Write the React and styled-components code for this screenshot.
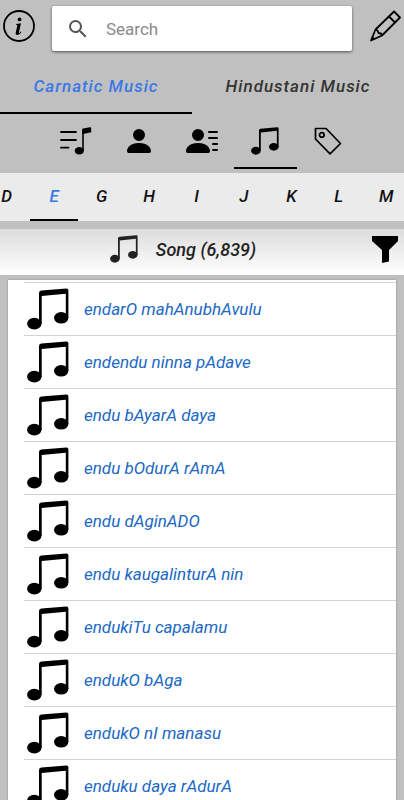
import React from "react";
import styled, { createGlobalStyle } from "styled-components";
import { BsPersonFill, BsPersonLinesFill } from "react-icons/bs";
import { MdSearch } from "react-icons/md";

const GlobalStyle = createGlobalStyle`
  *, *::before, *::after { box-sizing: border-box; }
  html, body { margin: 0; height: 100%; overflow: hidden; }
  #root { height: 100%; }
  body { background: #c0c0c0; font-family: Roboto, sans-serif; }
  button, input { font: inherit; color: inherit; }
  svg { display: block; flex: none; }
`;

const Page = styled.div`
  display: flex;
  flex-direction: column;
  height: 100%;
  background: #c0c0c0;
`;

const TopBar = styled.header`
  display: flex;
  align-items: flex-start;
  gap: 16px;
  padding: 6px 2px 0;
`;

const IconButton = styled.button`
  display: grid;
  place-items: center;
  flex: none;
  height: 40px;
  padding: 0;
  border: 0;
  background: none;
  color: #000;
`;

const SearchBox = styled.label`
  display: flex;
  align-items: center;
  flex: 1;
  min-width: 0;
  height: 45px;
  padding: 0 14px;
  gap: 16px;
  border-radius: 2px;
  background: #fff;
  color: #555;
  box-shadow: 0 1px 3px rgba(0, 0, 0, 0.6);
`;

const SearchInput = styled.input`
  flex: 1;
  min-width: 0;
  padding: 0;
  border: 0;
  outline: 0;
  background: none;
  font-size: 17px;
  &::placeholder { color: #8a8a8a; opacity: 1; }
`;

const StyleTabs = styled.nav`
  display: grid;
  grid-template-columns: 192fr 212fr;
  margin-top: 7px;
`;

const StyleTab = styled.button`
  height: 56px;
  padding: 2px 0 0;
  border: 0;
  border-bottom: 2px solid ${(p) => (p.$active ? "#000" : "transparent")};
  background: none;
  color: ${(p) => (p.$active ? "#3b78e7" : "#333")};
  font-size: 17px;
  font-style: italic;
  font-weight: 500;
  letter-spacing: 1px;
  white-space: nowrap;
`;

const KindTabs = styled.nav`
  display: flex;
  justify-content: center;
  height: 59px;
`;

const KindTab = styled.button`
  display: grid;
  place-items: center;
  width: 63px;
  height: 55px;
  padding: 0;
  border: 0;
  border-bottom: 2px solid ${(p) => (p.$active ? "#000" : "transparent")};
  background: none;
  color: #000;
`;

const LetterStrip = styled.nav`
  overflow: hidden;
  background: #ebebeb;
  flex: none;
`;

const LetterRow = styled.div`
  display: flex;
  margin: 0 -6px 0 -17px;
`;

const LetterTab = styled.button`
  flex: 1;
  height: 48px;
  padding: 0;
  border: 0;
  border-bottom: 2px solid ${(p) => (p.$active ? "#000" : "transparent")};
  background: none;
  color: ${(p) => (p.$active ? "#3b78e7" : "#111")};
  font-size: 17px;
  font-style: italic;
  font-weight: 500;
`;

const Heading = styled.div`
  display: grid;
  grid-template-columns: 1fr auto 1fr;
  align-items: center;
  flex: none;
  height: 46px;
  margin: 8px 0 5px;
  padding: 0 5px 6px;
  background: linear-gradient(#dcdcdc, #fff);
`;

const HeadingTitle = styled.h1`
  grid-column: 2;
  display: flex;
  align-items: center;
  gap: 18px;
  margin: 0;
  padding-right: 38px;
  color: #222;
  font-size: 18px;
  font-style: italic;
  font-weight: 500;
`;

const FilterButton = styled(IconButton)`
  justify-self: end;
`;

const SongList = styled.ul`
  flex: 1;
  min-height: 0;
  overflow: hidden;
  margin: 0 8px;
  padding: 2px 0 0 16px;
  list-style: none;
  background: #fff;
  box-shadow: 0 0 2px rgba(0, 0, 0, 0.3);
`;

const SongRow = styled.li`
  display: flex;
  align-items: center;
  gap: 15px;
  height: 53px;
  padding: 0 0 1px 3px;
  border-top: 1px solid #d4d4d4;
`;

const SongLink = styled.a`
  color: #2068c4;
  font-size: 17px;
  font-style: italic;
  text-decoration: none;
`;

function InfoIcon() {
  return (
    <svg width="34" height="34" viewBox="0 0 34 34" fill="none" aria-hidden="true">
      <circle cx="17" cy="17" r="15" stroke="#000" strokeWidth="1.8" />
      <circle cx="17.6" cy="10.4" r="1.9" fill="#000" />
      <path
        d="M14 15 19 14.3 16.9 23.4C16.7 24.5 17.4 24.4 18.8 22.5L19.4 23C17.8 25.3 16.5 26 15.3 26C13.7 26 13.4 24.9 13.8 23.3L15.3 16.7C15.5 15.9 15 15.7 14 15.7Z"
        fill="#000"
      />
    </svg>
  );
}

function PencilIcon() {
  return (
    <svg width="34" height="34" viewBox="0 0 34 34" fill="none" stroke="#000" strokeWidth="1.8" strokeLinejoin="round" aria-hidden="true">
      <path d="M26 2.5 32 8.5 14 26.5 3 31.5 7.5 20.5ZM21 7.500 27 13.500M7.500 20.500 9.500 21.500 10.500 24 13 24.500 14 26.500" />
      <path d="m2.500 32 2-5 3 3Z" fill="#000" stroke="none" />
    </svg>
  );
}

function BeamedNotesIcon({ size }) {
  return (
    <svg width={size} height={size} viewBox="0 0 42 42" fill="currentColor" aria-hidden="true">
      <ellipse cx="7.3" cy="35.7" rx="7.2" ry="5.9" />
      <ellipse cx="34.200" cy="29.800" rx="7.200" ry="5.800" />
      <path d="M12 5Q12 2.700 14.300 2.500L39.300 0.400Q41.400 0.300 41.400 2.300V30H38.800V5.800L14.700 8.100V36H12Z" />
    </svg>
  );
}

function NoteListIcon() {
  return (
    <svg width="32" height="28" viewBox="0 0 32 28" fill="none" stroke="currentColor" aria-hidden="true">
      <path d="M1 5H16M1 13H16M1 20.700H8.500" strokeWidth="1.800" strokeLinecap="round" />
      <path d="M23 3V24" strokeWidth="1.600" />
      <path d="M22.200 2.500Q22.200 1.800 23 1.600L30 0.200Q31.200 0 31.200 1.200V5.300L22.200 7.200Z" fill="currentColor" stroke="none" />
      <ellipse cx="19.300" cy="23.800" rx="4.600" ry="3.700" fill="currentColor" stroke="none" />
    </svg>
  );
}

function TagIcon() {
  return (
    <svg width="28" height="28" viewBox="0 0 28 28" fill="none" stroke="#000" strokeWidth="1.7" strokeLinejoin="round" aria-hidden="true">
      <path d="M1.5 1.5H12L26.5 16.5 16 26.8 1.5 12Z" />
      <circle cx="7.8" cy="7.9" r="2.3" />
    </svg>
  );
}

function FunnelIcon() {
  return (
    <svg width="28" height="30" viewBox="0 0 28 30" aria-hidden="true">
      <path d="M1 2H27V7L18 16V27.500L11 29V16L1 7Z" fill="#000" />
    </svg>
  );
}

const kinds = [
  { label: "Playlists", Icon: NoteListIcon },
  { label: "Composers", Icon: BsPersonFill, size: 32 },
  { label: "Artists", Icon: BsPersonLinesFill, size: 32 },
  { label: "Songs", Icon: BeamedNotesIcon, size: 28, active: true },
  { label: "Tags", Icon: TagIcon },
];

const letters = ["D", "E", "G", "H", "I", "J", "K", "L", "M"];

const songs = [
  "endarO mahAnubhAvulu",
  "endendu ninna pAdave",
  "endu bAyarA daya",
  "endu bOdurA rAmA",
  "endu dAginADO",
  "endu kaugalinturA nin",
  "endukiTu capalamu",
  "endukO bAga",
  "endukO nI manasu",
  "enduku daya rAdurA",
];

export default function App() {
  return (
    <Page>
      <GlobalStyle />
      <TopBar>
        <IconButton aria-label="About"><InfoIcon /></IconButton>
        <SearchBox>
          <MdSearch size={24} aria-hidden="true" />
          <SearchInput type="text" placeholder="Search" aria-label="Search" />
        </SearchBox>
        <IconButton aria-label="Edit"><PencilIcon /></IconButton>
      </TopBar>
      <StyleTabs>
        <StyleTab $active>Carnatic Music</StyleTab>
        <StyleTab>Hindustani Music</StyleTab>
      </StyleTabs>
      <KindTabs>
        {kinds.map(({ label, Icon, size, active }) => (
          <KindTab key={label} aria-label={label} $active={active}>
            <Icon size={size} />
          </KindTab>
        ))}
      </KindTabs>
      <LetterStrip>
        <LetterRow>
          {letters.map((letter) => (
            <LetterTab key={letter} $active={letter === "E"}>{letter}</LetterTab>
          ))}
        </LetterRow>
      </LetterStrip>
      <Heading>
        <HeadingTitle>
          <BeamedNotesIcon size={28} />
          Song (6,839)
        </HeadingTitle>
        <FilterButton aria-label="Filter"><FunnelIcon /></FilterButton>
      </Heading>
      <SongList>
        {songs.map((song) => (
          <SongRow key={song}>
            <BeamedNotesIcon size={42} />
            <SongLink href="#">{song}</SongLink>
          </SongRow>
        ))}
      </SongList>
    </Page>
  );
}
